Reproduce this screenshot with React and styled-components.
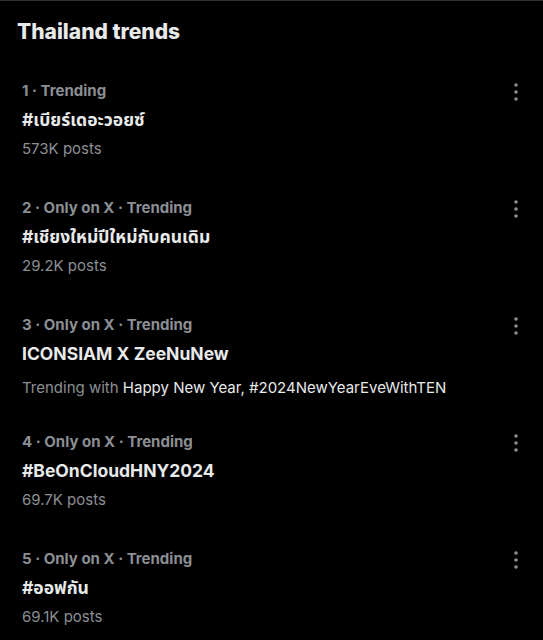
import React from 'react';
import styled, { createGlobalStyle } from 'styled-components';

const trends = [
  { rank: 1, label: 'Trending', name: '#เบียร์เดอะวอยซ์', posts: '573K posts' },
  { rank: 2, label: 'Only on X · Trending', name: '#เชียงใหม่ปีใหม่กับคนเดิม', posts: '29.2K posts' },
  {
    rank: 3,
    label: 'Only on X · Trending',
    name: 'ICONSIAM X ZeeNuNew',
    with: 'Happy New Year, #2024NewYearEveWithTEN',
  },
  { rank: 4, label: 'Only on X · Trending', name: '#BeOnCloudHNY2024', posts: '69.7K posts' },
  { rank: 5, label: 'Only on X · Trending', name: '#ออฟกัน', posts: '69.1K posts' },
];

const Global = createGlobalStyle`
  body {
    margin: 0;
    background: #000;
    font-family: Inter, "Noto Sans", "Noto Sans Thai", "DejaVu Sans", sans-serif;
  }
`;

const Panel = styled.section`
  width: 543px;
  height: 640px;
  background: #000;
  border-top: 1px solid #2f3336;
  box-sizing: border-box;
  overflow: hidden;
`;

const Heading = styled.h2`
  margin: 0;
  padding: 17px 17px 0;
  font-size: 21px;
  font-weight: 800;
  line-height: 28px;
  color: #e7e9ea;
`;

const List = styled.div`
  display: flex;
  flex-direction: column;
  padding-top: 35px;
`;

const Item = styled.div`
  display: flex;
  align-items: flex-start;
  justify-content: space-between;
  height: 117px;
  padding: 0 22px;
  box-sizing: border-box;
`;

const Body = styled.div`
  display: flex;
  flex-direction: column;
`;

const Meta = styled.div`
  font-size: 15px;
  font-weight: 700;
  line-height: 20px;
  color: #8b8f94;
`;

const Name = styled.div`
  margin-top: 9px;
  font-size: 17.5px;
  font-weight: 700;
  line-height: 20px;
  color: #e7e9ea;
`;

const Sub = styled.div`
  margin-top: ${({ $wide }) => ($wide ? '14px' : '9px')};
  font-size: 15px;
  line-height: 20px;
  color: #8b8f94;

  span {
    color: #e7e9ea;
  }
`;

const More = styled.svg`
  width: 20px;
  height: 20px;
  margin: 1px -5px 0 0;
  fill: #8b8f94;
`;

const Dots = () => (
  <More viewBox="0 0 20 20">
    <circle cx="10" cy="3" r="1.8" />
    <circle cx="10" cy="10" r="1.8" />
    <circle cx="10" cy="17" r="1.8" />
  </More>
);

export default function App() {
  return (
    <Panel>
      <Global />
      <Heading>Thailand trends</Heading>
      <List>
        {trends.map((t) => (
          <Item key={t.rank}>
            <Body>
              <Meta>
                {t.rank} · {t.label}
              </Meta>
              <Name>{t.name}</Name>
              {t.with ? (
                <Sub $wide>
                  Trending with <span>{t.with}</span>
                </Sub>
              ) : (
                <Sub>{t.posts}</Sub>
              )}
            </Body>
            <Dots />
          </Item>
        ))}
      </List>
    </Panel>
  );
}
